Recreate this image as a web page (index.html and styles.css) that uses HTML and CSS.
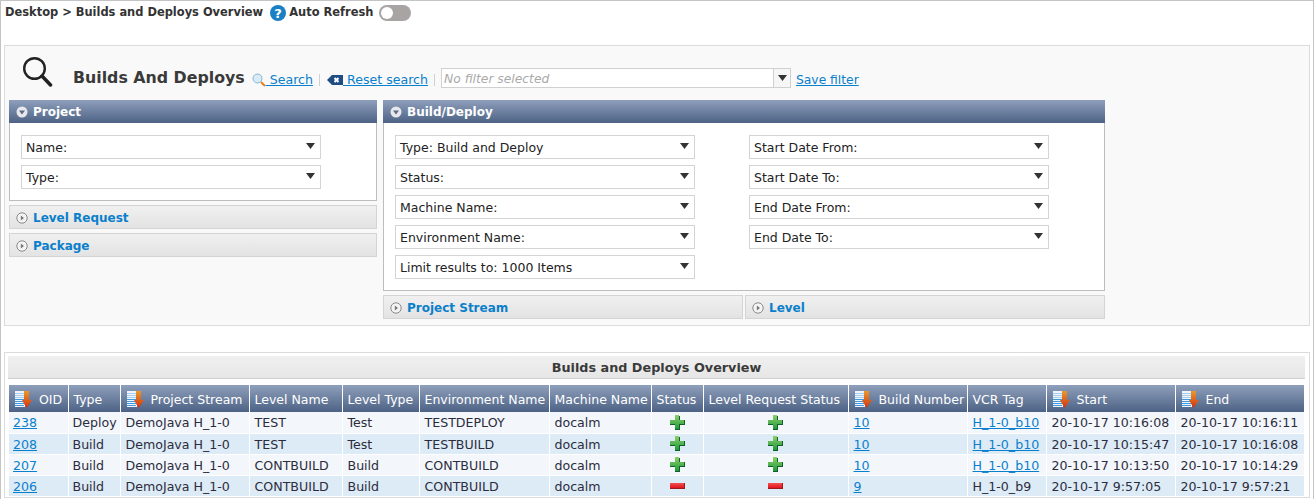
FILE: index.html
```html
<!DOCTYPE html>
<html lang="en">

<head>
  <meta charset="UTF-8">
  <title>Builds and Deploys Overview</title>
  <link rel="stylesheet" href="styles.css">
</head>

<body>
  <svg class="defs" width="0" height="0">
    <defs>
      <linearGradient id="g-plus" x1="0" y1="0" x2="0" y2="1">
        <stop offset="0" stop-color="#8fd06a" />
        <stop offset="1" stop-color="#1f9a3a" />
      </linearGradient>
      <linearGradient id="g-minus" x1="0" y1="0" x2="0" y2="1">
        <stop offset="0" stop-color="#f4504f" />
        <stop offset="1" stop-color="#e0141c" />
      </linearGradient>
      <linearGradient id="g-arrow" x1="0" y1="0" x2="0" y2="1">
        <stop offset="0" stop-color="#ea9a2c" />
        <stop offset="1" stop-color="#d2300e" />
      </linearGradient>
      <symbol id="i-plus" viewBox="0 0 15 15">
        <path d="M5 1h5v4h5v5h-5v5H5v-5H0V5h5z" fill="#11602a" />
        <path d="M5 0h4v5h5v4H9v5H5V9H0V5h5z" fill="url(#g-plus)" />
      </symbol>
      <symbol id="i-minus" viewBox="0 0 15 6">
        <rect y="0" width="15" height="6" fill="#9a1a1e" />
        <rect y="0" width="14" height="5" fill="url(#g-minus)" />
      </symbol>
      <symbol id="i-sort" viewBox="0 0 17 17">
        <rect x="0" y="0" width="10" height="16" fill="#eef5fc" />
        <path d="M0 2.500h9M0 4.500h9M0 6.500h9" stroke="#a9cdea" />
        <path d="M0 8.500h9M0 10.500h9M0 12.500h9M0 14.500h9" stroke="#3f97dc" />
        <path d="M9 0h5v9h3l-5.500 8L7 9h2z" fill="url(#g-arrow)" />
      </symbol>
      <symbol id="i-open" viewBox="0 0 12 12">
        <circle cx="6" cy="6" r="5.500" fill="#e8e8ec" />
        <path d="M3 4.500h6L6 8.500z" fill="#5a6b88" />
      </symbol>
      <symbol id="i-closed" viewBox="0 0 12 12">
        <circle cx="6" cy="6" r="5.200" fill="#f4f4f4" stroke="#8a8a8a" />
        <path d="M4.800 3.500v5L8 6z" fill="#777" />
      </symbol>
      <symbol id="i-caret" viewBox="0 0 9 6">
        <path d="M0 0h9L4.500 6z" fill="#333" />
      </symbol>
    </defs>
  </svg>

  <div class="page">
    <div class="topbar">
      <span class="crumb">Desktop &gt; Builds and Deploys Overview</span>
      <svg class="help" viewBox="0 0 16 16" width="16" height="16">
        <circle cx="8" cy="8" r="8" fill="#1b7fc4" />
        <text x="8" y="12.500" text-anchor="middle" class="help-mark">?</text>
      </svg>
      <span class="crumb">Auto Refresh</span>
      <span class="toggle"><span class="knob"></span></span>
    </div>

    <section class="search-panel">
      <div class="search-head">
        <svg class="big-glass" viewBox="0 0 30 30" width="30" height="30">
          <circle cx="11.500" cy="11.500" r="10.300" fill="none" stroke="#222" stroke-width="2.400" />
          <path d="M19 19l8.500 9" stroke="#222" stroke-width="3.500" stroke-linecap="round" />
        </svg>
        <h1 class="search-title">Builds And Deploys</h1>
        <a class="tool-link" href="#">
          <svg viewBox="0 0 14 14" width="14" height="14">
            <circle cx="5.500" cy="5.500" r="4.500" fill="#d8ecf8" stroke="#8ab4d0" />
            <path d="M9 9l4 4" stroke="#e8801c" stroke-width="2" />
          </svg>
          <span class="lnk">&nbsp;Search</span>
        </a>
        <span class="sep"></span>
        <a class="tool-link reset-link" href="#">
          <svg viewBox="0 0 16 10" width="16" height="10">
            <path d="M5 0h11v10H5L0 5z" fill="#1d4d84" />
            <path d="M7.500 3l4 4M11.500 3l-4 4" stroke="#fff" stroke-width="2" />
          </svg>
          <span class="lnk">&nbsp;Reset search</span>
        </a>
        <span class="sep"></span>
        <div class="filter-box">
          <span class="filter-text">No filter selected</span>
          <span class="filter-btn"><svg class="caret"><use href="#i-caret" /></svg></span>
        </div>
        <a class="save-link" href="#">Save filter</a>
      </div>

      <div class="search-cols">
        <div class="col-left">
          <div class="box">
            <div class="box-head"><svg class="tog"><use href="#i-open" /></svg>Project</div>
            <div class="box-body stack">
              <div class="sel"><span>Name:</span><svg class="caret"><use href="#i-caret" /></svg></div>
              <div class="sel"><span>Type:</span><svg class="caret"><use href="#i-caret" /></svg></div>
            </div>
          </div>
          <div class="fold"><svg class="tog"><use href="#i-closed" /></svg>Level Request</div>
          <div class="fold"><svg class="tog"><use href="#i-closed" /></svg>Package</div>
        </div>

        <div class="col-right">
          <div class="box">
            <div class="box-head"><svg class="tog"><use href="#i-open" /></svg>Build/Deploy</div>
            <div class="box-body two-stacks">
              <div class="stack">
                <div class="sel"><span>Type: Build and Deploy</span><svg class="caret"><use href="#i-caret" /></svg></div>
                <div class="sel"><span>Status:</span><svg class="caret"><use href="#i-caret" /></svg></div>
                <div class="sel"><span>Machine Name:</span><svg class="caret"><use href="#i-caret" /></svg></div>
                <div class="sel"><span>Environment Name:</span><svg class="caret"><use href="#i-caret" /></svg></div>
                <div class="sel"><span>Limit results to: 1000 Items</span><svg class="caret"><use href="#i-caret" /></svg></div>
              </div>
              <div class="stack">
                <div class="sel"><span>Start Date From:</span><svg class="caret"><use href="#i-caret" /></svg></div>
                <div class="sel"><span>Start Date To:</span><svg class="caret"><use href="#i-caret" /></svg></div>
                <div class="sel"><span>End Date From:</span><svg class="caret"><use href="#i-caret" /></svg></div>
                <div class="sel"><span>End Date To:</span><svg class="caret"><use href="#i-caret" /></svg></div>
              </div>
            </div>
          </div>
          <div class="fold-row">
            <div class="fold"><svg class="tog"><use href="#i-closed" /></svg>Project Stream</div>
            <div class="fold"><svg class="tog"><use href="#i-closed" /></svg>Level</div>
          </div>
        </div>
      </div>
    </section>

    <section class="result-panel">
      <div class="result-title">Builds and Deploys Overview</div>
      <table class="grid">
        <colgroup>
          <col class="c-oid"><col class="c-type"><col class="c-stream"><col class="c-lname"><col class="c-ltype">
          <col class="c-env"><col class="c-mach"><col class="c-status"><col class="c-lrs"><col class="c-build">
          <col class="c-vcr"><col class="c-date"><col class="c-date">
        </colgroup>
        <thead>
          <tr>
            <th><svg class="sort"><use href="#i-sort" /></svg><span class="sort-label">OID</span></th>
            <th>Type</th>
            <th><svg class="sort"><use href="#i-sort" /></svg><span class="sort-label">Project Stream</span></th>
            <th>Level Name</th>
            <th>Level Type</th>
            <th>Environment Name</th>
            <th>Machine Name</th>
            <th>Status</th>
            <th>Level Request Status</th>
            <th><svg class="sort"><use href="#i-sort" /></svg><span class="sort-label">Build Number</span></th>
            <th>VCR Tag</th>
            <th><svg class="sort"><use href="#i-sort" /></svg><span class="sort-label">Start</span></th>
            <th><svg class="sort"><use href="#i-sort" /></svg><span class="sort-label">End</span></th>
          </tr>
        </thead>
        <tbody>
          <tr>
            <td><a href="#">238</a></td><td>Deploy</td><td>DemoJava H_1-0</td><td>TEST</td><td>Test</td><td>TESTDEPLOY</td><td>docalm</td>
            <td class="mid"><svg class="plus"><use href="#i-plus" /></svg></td><td class="mid"><svg class="plus"><use href="#i-plus" /></svg></td>
            <td><a href="#">10</a></td><td><a href="#">H_1-0_b10</a></td><td>20-10-17 10:16:08</td><td>20-10-17 10:16:11</td>
          </tr>
          <tr>
            <td><a href="#">208</a></td><td>Build</td><td>DemoJava H_1-0</td><td>TEST</td><td>Test</td><td>TESTBUILD</td><td>docalm</td>
            <td class="mid"><svg class="plus"><use href="#i-plus" /></svg></td><td class="mid"><svg class="plus"><use href="#i-plus" /></svg></td>
            <td><a href="#">10</a></td><td><a href="#">H_1-0_b10</a></td><td>20-10-17 10:15:47</td><td>20-10-17 10:16:08</td>
          </tr>
          <tr>
            <td><a href="#">207</a></td><td>Build</td><td>DemoJava H_1-0</td><td>CONTBUILD</td><td>Build</td><td>CONTBUILD</td><td>docalm</td>
            <td class="mid"><svg class="plus"><use href="#i-plus" /></svg></td><td class="mid"><svg class="plus"><use href="#i-plus" /></svg></td>
            <td><a href="#">10</a></td><td><a href="#">H_1-0_b10</a></td><td>20-10-17 10:13:50</td><td>20-10-17 10:14:29</td>
          </tr>
          <tr>
            <td><a href="#">206</a></td><td>Build</td><td>DemoJava H_1-0</td><td>CONTBUILD</td><td>Build</td><td>CONTBUILD</td><td>docalm</td>
            <td class="mid"><svg class="minus"><use href="#i-minus" /></svg></td><td class="mid"><svg class="minus"><use href="#i-minus" /></svg></td>
            <td><a href="#">9</a></td><td>H_1-0_b9</td><td>20-10-17 9:57:05</td><td>20-10-17 9:57:21</td>
          </tr>
        </tbody>
      </table>
    </section>
  </div>
</body>

</html>
```

FILE: styles.css
```css
html,
body {
  margin: 0;
  padding: 0;
  height: 100%;
  overflow: hidden;
  background: #fff;
}

body {
  font-family: "DejaVu Sans", Verdana, sans-serif;
  font-size: 12px;
  color: #333;
}

.defs {
  display: block;
  height: 0;
}

a {
  color: #0a7fcc;
}

.page {
  height: 499px;
  box-sizing: border-box;
  border: 1px solid #c4c4c4;
  border-bottom: 0;
  padding: 0 3px;
}

/* top line */
.topbar {
  height: 44px;
  display: flex;
  align-items: flex-start;
  padding: 4px 0 0 1px;
  box-sizing: border-box;
}

.crumb {
  font-size: 11.45px;
  font-weight: bold;
  line-height: 15px;
  color: #333;
}

.help {
  margin: 0 3px 0 7px;
  flex: none;
}

.help-mark {
  font-size: 13px;
  font-weight: bold;
  fill: #fff;
}

.toggle {
  width: 32px;
  height: 16px;
  margin-left: 6px;
  border-radius: 8px;
  background: #a8a4a4;
  display: flex;
  align-items: center;
  padding-left: 2px;
  box-sizing: border-box;
}

.knob {
  width: 12px;
  height: 12px;
  border-radius: 50%;
  background: #fff;
}

/* search panel */
.search-panel {
  height: 281px;
  box-sizing: border-box;
  border: 1px solid #dcdcdc;
  background: #f9f9f9;
  padding: 0 4px;
}

.search-head {
  height: 54px;
  display: flex;
  align-items: flex-end;
  padding-bottom: 12px;
  box-sizing: border-box;
}

.big-glass {
  margin: 0 20px 1px 14px;
  flex: none;
}

.search-title {
  margin: 0 7px 0 0;
  font-size: 15.8px;
  line-height: 20px;
  font-weight: bold;
  color: #3a3a3a;
  white-space: nowrap;
}

.tool-link {
  display: flex;
  align-items: center;
  margin-bottom: 1px;
  line-height: 15px;
  font-size: 12.6px;
  white-space: nowrap;
}

.reset-link {
  margin-left: 1px;
}

.lnk {
  text-decoration: underline;
}

.sep {
  width: 1px;
  height: 12px;
  margin: 0 6px 2px;
  background: #d0d0d0;
}

.filter-box {
  width: 350px;
  height: 20px;
  margin: 0 5px 0 0;
  box-sizing: border-box;
  border: 1px solid #d0d0d0;
  background: #fff;
  display: flex;
  align-items: center;
  flex: none;
}

.filter-text {
  flex: 1;
  padding: 1px 0 0 2px;
  font-style: italic;
  font-size: 12.3px;
  color: #aaa;
}

.filter-btn {
  width: 16px;
  height: 18px;
  border-left: 1px solid #d0d0d0;
  background: #f6f6f6;
  display: flex;
  align-items: center;
  justify-content: center;
}

.save-link {
  line-height: 15px;
  font-size: 12.3px;
  white-space: nowrap;
}

.search-cols {
  display: flex;
  gap: 6px;
}

.col-left {
  width: 368px;
  flex: none;
}

.col-right {
  width: 722px;
  flex: none;
}

.box {
  border: 1px solid #bdbdbd;
  border-top: 0;
  background: #fff;
}

.box-head {
  height: 23px;
  box-sizing: border-box;
  padding-top: 1px;
  margin: 0 -1px;
  display: flex;
  align-items: center;
  font-size: 12px;
  font-weight: bold;
  color: #fff;
  background: linear-gradient(#8e9fbb, #4d6285);
}

.tog {
  width: 12px;
  height: 12px;
  margin: 0 5px 0 7px;
  flex: none;
}

.fold .tog {
  margin-left: 6px;
}

.box-body {
  padding: 12px 11px 0;
  box-sizing: border-box;
}

.stack {
  display: flex;
  flex-direction: column;
  gap: 6px;
}

.two-stacks {
  display: flex;
  gap: 54px;
  height: 167px;
}

.col-left .box-body {
  height: 77px;
}

.sel {
  width: 300px;
  height: 24px;
  flex: none;
  box-sizing: border-box;
  border: 1px solid #d4d4d4;
  background: #fff;
  padding: 0 5px 0 4px;
  display: flex;
  align-items: center;
  justify-content: space-between;
  font-size: 12.5px;
  color: #222;
}

.caret {
  width: 9px;
  height: 6px;
  flex: none;
}

.sel .caret {
  margin-top: -3px;
}

.fold {
  height: 24px;
  margin-top: 4px;
  padding-top: 1px;
  box-sizing: border-box;
  border: 1px solid #d4d4d4;
  background: linear-gradient(#f0f0f0, #e3e3e3);
  display: flex;
  align-items: center;
  font-size: 12px;
  font-weight: bold;
  color: #0a7fcc;
}

.fold-row {
  display: flex;
  gap: 2px;
}

.fold-row .fold {
  flex: 1;
}

/* result panel */
.result-panel {
  margin-top: 26px;
  border: 1px solid #dcdcdc;
  padding: 3px 4px 0 3px;
  height: 146px;
  box-sizing: border-box;
}

.result-title {
  height: 23px;
  box-sizing: border-box;
  margin: 0 0 6px;
  border-bottom: 1px solid #d0d0d0;
  background: linear-gradient(#f0f0f0, #e6e6e6);
  text-align: center;
  font-size: 12.8px;
  font-weight: bold;
  line-height: 23px;
  color: #3a3a3a;
}

.grid {
  table-layout: fixed;
  width: 1295px;
  margin-left: 1px;
  border-collapse: collapse;
  font-size: 12.5px;
}

.c-oid { width: 59px; }
.c-type { width: 52px; }
.c-stream { width: 129px; }
.c-lname { width: 93px; }
.c-ltype { width: 77px; }
.c-env { width: 130px; }
.c-mach { width: 102px; }
.c-status { width: 52px; }
.c-lrs { width: 145px; }
.c-build { width: 119px; }
.c-vcr { width: 79px; }
.c-date { width: 129px; }

.grid th {
  height: 27px;
  padding: 1px 0 0 5px;
  box-sizing: border-box;
  border-left: 1px solid #fff;
  background: linear-gradient(#8e9fbb, #4d6285);
  color: #fff;
  font-weight: normal;
  text-align: left;
  white-space: nowrap;
}

.grid th:first-child,
.grid td:first-child {
  border-left: 0;
}

.sort {
  width: 17px;
  height: 17px;
  margin-left: 1px;
  vertical-align: -4px;
}

.sort-label {
  margin-left: 7px;
}

.grid td {
  height: 21px;
  padding: 1px 0 0 4px;
  box-sizing: border-box;
  border-left: 1px solid #fff;
  border-bottom: 1px solid #fff;
  white-space: nowrap;
  font-size: 12.6px;
  color: #2c2c3c;
}

.grid td:nth-child(n+3) {
  padding-left: 5px;
}

.grid tbody tr:nth-child(odd) td {
  background: #f3f7fc;
}

.grid tbody tr:nth-child(even) td {
  background: #ddebf7;
}

.grid td.mid {
  padding: 0;
  text-align: center;
}

.plus {
  width: 15px;
  height: 15px;
  display: block;
  margin: 0 auto;
}

.minus {
  width: 15px;
  height: 6px;
  display: block;
  margin: 0 auto;
}
```
